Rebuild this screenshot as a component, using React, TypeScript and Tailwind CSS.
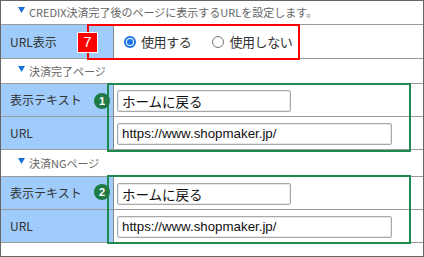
import React from "react";

const jp = "font-['Meiryo','Noto_Sans_CJK_JP','Noto_Sans',sans-serif]";

function Tri() {
  return (
    <svg width="7" height="6" viewBox="0 0 7 6" className="mr-[4px] mb-[5px]">
      <polygon points="0,0 7,0 3.5,6" fill="#1a6fd6" />
    </svg>
  );
}

function Section({ text, h }: { text: string; h: string }) {
  return (
    <div className={`${h} border-b border-[#9a9a9a] flex items-center pl-[17px] text-[11px] text-[#666]`}>
      <Tri />
      <span>{text}</span>
    </div>
  );
}

function Label({ text }: { text: string }) {
  return (
    <div className="w-[113px] shrink-0 bg-[#9fccfb] border-r border-[#888] flex items-center pl-[9px] text-[12px] text-[#333]">
      {text}
    </div>
  );
}

function Field({ value, w, jpText }: { value: string; w: string; jpText?: boolean }) {
  return (
    <div
      className={`${w} h-[22px] border border-[#a9a9a9] rounded-[2px] flex items-center pl-[4px] text-[#111] shadow-[inset_0_0_0_1px_#e8e8e8] ${
        jpText ? "text-[13.5px] " + jp : "text-[13.3px] font-['Liberation_Sans',Arial,sans-serif]"
      }`}
    >
      {value}
    </div>
  );
}

function FieldRow({ label, value, w, jpText }: { label: string; value: string; w: string; jpText?: boolean }) {
  return (
    <div className="h-[33px] border-b border-[#9a9a9a] flex">
      <Label text={label} />
      <div className="flex items-start pt-[6px] pl-[3px]">
        <Field value={value} w={w} jpText={jpText} />
      </div>
    </div>
  );
}

export default function App() {
  return (
    <div className={`relative w-[424px] h-[257px] border border-[#666] bg-white overflow-hidden ${jp}`}>
      <Section text="CREDIX決済完了後のページに表示するURLを設定します。" h="h-[24px]" />
      <div className="h-[34px] border-b border-[#9a9a9a] flex">
        <Label text="URL表示" />
        <div className="flex items-center pl-[10px] text-[13px] text-[#333] tracking-[-0.4px]">
          <span className="w-[12px] h-[12px] rounded-full border-[2px] border-[#1a73e8] flex items-center justify-center">
            <span className="w-[6px] h-[6px] rounded-full bg-[#1a73e8]" />
          </span>
          <span className="ml-[5px]">使用する</span>
          <span className="ml-[21px] w-[12px] h-[12px] rounded-full border border-[#767676]" />
          <span className="ml-[5px]">使用しない</span>
        </div>
      </div>
      <Section text="決済完了ページ" h="h-[25px]" />
      <FieldRow label="表示テキスト" value="ホームに戻る" w="w-[174px]" jpText />
      <FieldRow label="URL" value="https://www.shopmaker.jp/" w="w-[275px]" />
      <Section text="決済NGページ" h="h-[27px]" />
      <FieldRow label="表示テキスト" value="ホームに戻る" w="w-[174px]" jpText />
      <FieldRow label="URL" value="https://www.shopmaker.jp/" w="w-[275px]" />

      {/* annotation overlays */}
      <div className="absolute left-[86px] top-[23px] w-[213px] h-[36px] border-2 border-[#ff0000]" />
      <div className="absolute left-[76px] top-[31px] w-[21px] h-[21px] bg-[#ff0000] border border-white flex items-center justify-center text-white text-[15px] font-['Liberation_Sans',sans-serif]">
        7
      </div>
      <div className="absolute left-[106px] top-[82px] w-[304px] h-[69px] border-2 border-[#1e8a50]" />
      <div className="absolute left-[106px] top-[174px] w-[304px] h-[69px] border-2 border-[#1e8a50]" />
      <div className="absolute left-[93px] top-[92px] w-[16px] h-[16px] rounded-full bg-[#1f7a45] flex items-center justify-center text-white text-[11px] font-bold font-['Liberation_Sans',sans-serif]">
        1
      </div>
      <div className="absolute left-[93px] top-[183px] w-[16px] h-[16px] rounded-full bg-[#1f7a45] flex items-center justify-center text-white text-[11px] font-bold font-['Liberation_Sans',sans-serif]">
        2
      </div>
    </div>
  );
}
